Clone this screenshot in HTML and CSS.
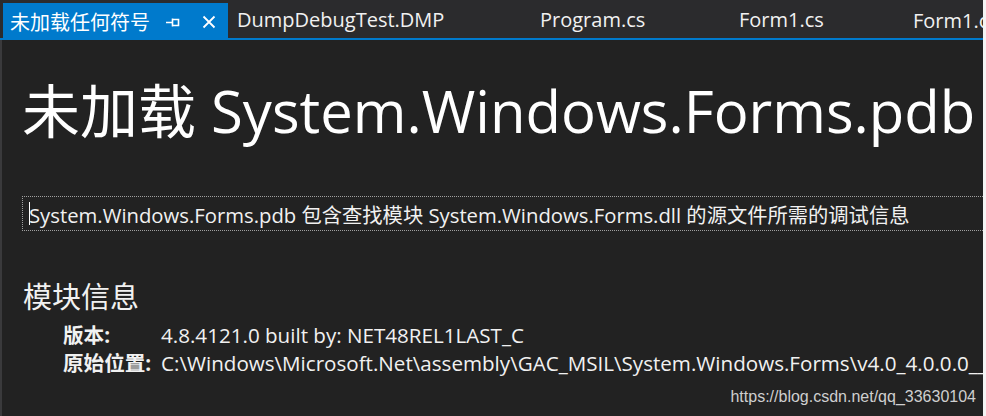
FILE: index.html
```html
<!DOCTYPE html>
<html lang="zh-CN">
<head>
<meta charset="utf-8">
<title>未加载任何符号</title>
<link rel="stylesheet" href="styles.css">
</head>
<body>
<div class="window">
  <div class="main">
    <div class="tabbar">
      <div class="tab active">
        <span class="tab-title">未加载任何符号</span>
        <svg class="pin" width="14" height="10" viewBox="0 0 14 10"><path d="M0 5.5H6M6.5 1.5V9.5M6.5 2.5H12.5V8.5H6.5" fill="none" stroke="#fff" stroke-width="1.6"/></svg>
        <svg class="close" width="14" height="14" viewBox="0 0 14 14"><path d="M1.5 1.5L12.5 12.5M12.5 1.5L1.5 12.5" fill="none" stroke="#fff" stroke-width="1.8"/></svg>
      </div>
      <div class="tab tab-dump">DumpDebugTest.DMP</div>
      <div class="tab tab-program">Program.cs</div>
      <div class="tab tab-form">Form1.cs</div>
      <div class="tab">Form1.cs [设计]</div>
    </div>
    <div class="content">
      <h1 class="title">未加载 System.Windows.Forms.pdb</h1>
      <div class="desc"><span class="caret"></span>System.Windows.Forms.pdb 包含查找模块 System.Windows.Forms.dll 的源文件所需的调试信息</div>
      <h2 class="section">模块信息</h2>
      <div class="info">
        <div class="label">版本:</div>
        <div class="value">4.8.4121.0 built by: NET48REL1LAST_C</div>
        <div class="label">原始位置:</div>
        <div class="value">C:\Windows\Microsoft.Net\assembly\GAC_MSIL\System.Windows.Forms\v4.0_4.0.0.0__b77a5c561934e089\System.Windows.Forms.dll</div>
      </div>
    </div>
  </div>
  <div class="edge"></div>
  <div class="watermark">https://blog.csdn.net/qq_33630104</div>
</div>
</body>
</html>
```

FILE: styles.css
```css
* { box-sizing: border-box; }
html, body {
  margin: 0;
  padding: 0;
  width: 986px;
  height: 416px;
  overflow: hidden;
  background: #222222;
}
.window {
  position: relative;
  display: flex;
  width: 986px;
  height: 416px;
  font-family: "Open Sans", "Noto Sans CJK SC", sans-serif;
  color: #f1f1f1;
}
.main {
  flex: 1;
  min-width: 0;
  display: flex;
  flex-direction: column;
  overflow: hidden;
}
.edge {
  width: 3px;
  background: #f4f4f4;
}
.tabbar {
  display: flex;
  height: 40px;
  padding-left: 3px;
  padding-top: 3px;
  background: #2b2b2d;
  border-bottom: 2px solid #007acc;
  white-space: nowrap;
  overflow: hidden;
  flex-shrink: 0;
}
.tab {
  display: flex;
  align-items: center;
  padding: 0 0 0 9px;
  font-size: 20px;
  color: #f1f1f1;
  flex-shrink: 0;
  margin-top: -2px;
}
.tab-dump { width: 303px; }
.tab-program { width: 199px; }
.tab-form { width: 174px; }
.tab.active {
  background: #007acc;
  color: #ffffff;
  padding: 0 12px 0 7px;
  margin-top: 0;
  margin-bottom: -2px;
  height: 37px;
}
.tab-title { font-size: 20px; }
.pin { margin-left: 16px; }
.close { margin-left: 22px; }
.content {
  flex: 1;
  border-left: 2px solid #3a3a3c;
  padding: 35px 0 0 20px;
  background: #222222;
}
.title {
  margin: 0;
  font-weight: 400;
  font-size: 58px;
  line-height: 72px;
  white-space: nowrap;
  color: #ffffff;
}
.desc {
  margin-top: 49px;
  margin-right: -10px;
  height: 35px;
  border: 1px dotted #a0a0a0;
  border-right: none;
  display: flex;
  align-items: center;
  padding-left: 6px;
  font-size: 20.3px;
  white-space: nowrap;
  color: #f1f1f1;
}
.caret {
  display: inline-block;
  width: 1px;
  height: 23px;
  background: #ffffff;
  margin-right: -1px;
}
.section {
  margin: 48px 0 0 1px;
  font-weight: 400;
  font-size: 29px;
  line-height: 36px;
  color: #f1f1f1;
}
.info {
  display: grid;
  grid-template-columns: 98px auto;
  margin: 6px 0 0 41px;
  font-size: 20.6px;
  line-height: 28px;
  white-space: nowrap;
}
.label { font-weight: 700; }
.value { color: #f1f1f1; }
.watermark {
  position: absolute;
  right: 10px;
  bottom: 10px;
  font-family: "Liberation Sans", Arial, sans-serif;
  font-size: 16px;
  color: #cfcfcf;
}
```
